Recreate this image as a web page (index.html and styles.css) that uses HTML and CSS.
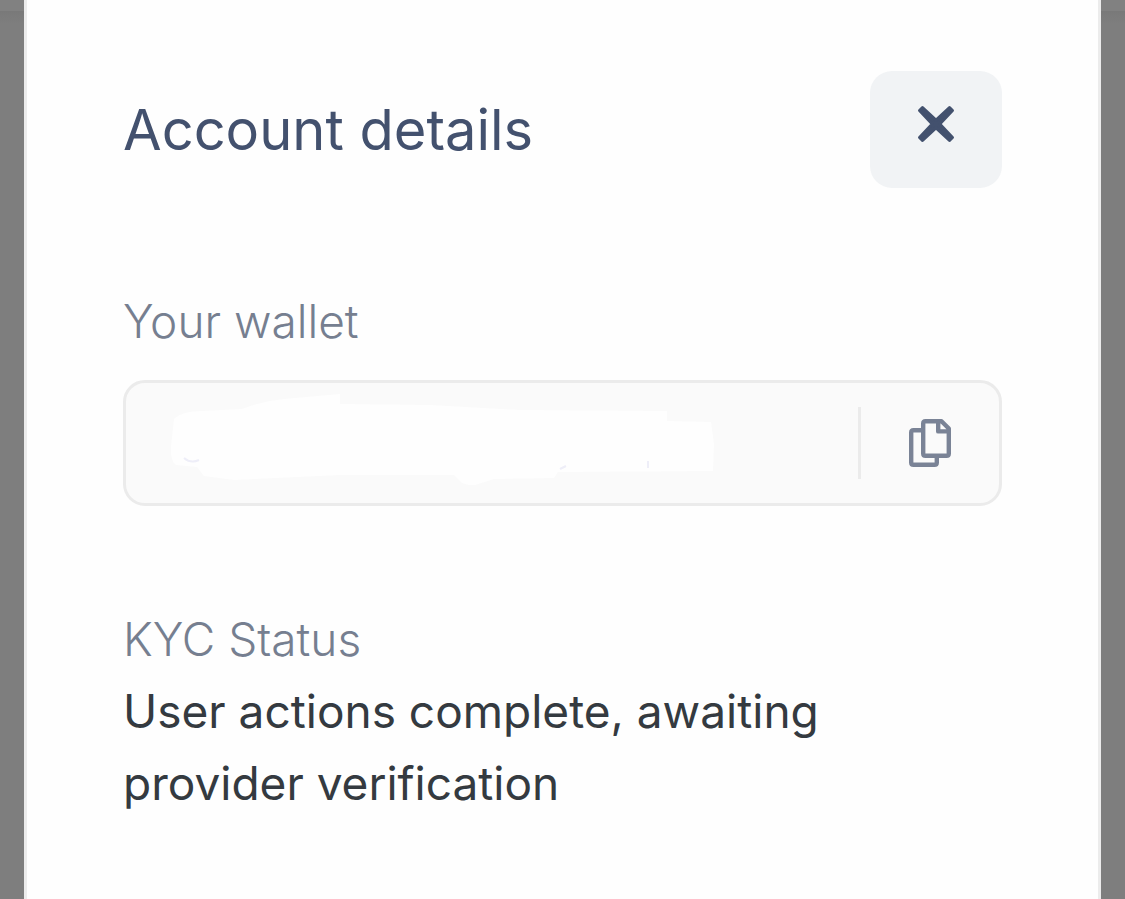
FILE: index.html
```html
<!DOCTYPE html>
<html lang="en">
<head>
<meta charset="utf-8">
<meta name="viewport" content="width=device-width, initial-scale=1">
<title>Account details</title>
<link rel="stylesheet" href="styles.css">
</head>
<body>
<div class="backdrop">
  <main class="modal" role="dialog" aria-labelledby="title">
    <header class="modal-header">
      <h1 class="title" id="title">Account details</h1>
      <button class="close" type="button" aria-label="Close">
        <svg class="close-icon" viewBox="0 0 38 38" aria-hidden="true"><path d="M5.500 2.500L19 15.200L32.500 2.500L35.500 5.500L22.800 19L35.500 32.500L32.500 35.500L19 22.800L5.500 35.500L2.500 32.500L15.200 19L2.500 5.500Z"/></svg>
      </button>
    </header>
    <section class="wallet">
      <h2 class="label">Your wallet</h2>
      <div class="wallet-box">
        <svg class="mask" viewBox="0 0 546 92" aria-hidden="true">
          <path class="mask-fill" d="M4 26Q12 18 32 18L72 16Q92 8 114 6L170 1V11L260 12L350 17L497 18V28L541 29L544 51L543 78L388 79L384 85L324 86L302 93L292 90L284 82L170 82L64 87L34 83L27 74L6 72Q0 68 1 53Z"/>
          <path class="mask-trace" d="M14 65Q21 71 29 67M390 76L396 73M478 68V75"/>
        </svg>
        <button class="copy" type="button" aria-label="Copy wallet address">
          <svg class="copy-icon" viewBox="0 0 42 48" aria-hidden="true"><path d="M14 11.200H4.500Q2.200 11.200 2.200 13.500V43.500Q2.200 45.800 4.500 45.800H25.500Q27.800 45.800 27.800 43.500V37M16.500 2.200H32.500L39.800 9.500V34.500Q39.800 36.800 37.500 36.800H16.500Q14.200 36.800 14.200 34.500V4.500Q14.200 2.200 16.500 2.200ZM29.200 2.200V12.400H39.800"/></svg>
        </button>
      </div>
    </section>
    <section class="status">
      <h2 class="label">KYC Status</h2>
      <p class="status-text">User actions complete, awaiting provider verification</p>
    </section>
  </main>
</div>
</body>
</html>
```
FILE: styles.css
```css
* { box-sizing: border-box; }
body {
  margin: 0;
  font-family: Inter, "Liberation Sans", sans-serif;
  background: #7e7e7e;
}
h1, h2, p { margin: 0; }
.backdrop {
  min-height: 100vh;
  display: flex;
  padding: 0 24px;
  background: linear-gradient(#818181 11px, #797979 11px, #7e7e7e 24px);
}
.modal {
  flex: 1;
  min-width: 0;
  padding: 71px 96px 48px;
  background: #fefefe;
  border: solid #ececec;
  border-width: 0 3px;
}
.modal-header {
  display: flex;
  justify-content: space-between;
  align-items: center;
}
.title {
  font-size: 56px;
  line-height: 72px;
  font-weight: 400;
  color: #43516e;
}
.close {
  width: 132px;
  height: 117px;
  padding: 0 0 12px;
  display: grid;
  place-items: center;
  border: 0;
  border-radius: 22px;
  background: #f1f3f5;
}
.close-icon {
  width: 38px;
  height: 38px;
  fill: #43516e;
  stroke: #43516e;
  stroke-width: 3;
  stroke-linejoin: round;
}
.wallet { margin-top: 97px; }
.label {
  font-size: 46px;
  line-height: 72px;
  font-weight: 300;
  color: #767f90;
}
.wallet-box {
  display: flex;
  align-items: center;
  justify-content: space-between;
  height: 126px;
  margin-top: 23px;
  padding-left: 44px;
  background: #fafafa;
  border: 3px solid #ebebeb;
  border-radius: 22px;
}
.mask {
  width: 546px;
  height: 92px;
  margin-bottom: 8px;
}
.mask-fill { fill: #fefefe; }
.mask-trace {
  fill: none;
  stroke: #eeeef8;
  stroke-width: 2;
}
.copy {
  width: 141px;
  height: 72px;
  padding: 0;
  display: grid;
  place-items: center;
  background: none;
  border: 0;
  border-left: 3px solid #ebebeb;
}
.copy-icon {
  width: 42px;
  height: 48px;
  fill: none;
  stroke: #7a8396;
  stroke-width: 4.4;
  stroke-linejoin: round;
}
.status { margin-top: 97px; }
.status-text {
  font-size: 46px;
  line-height: 72px;
  color: #343a40;
}
```
